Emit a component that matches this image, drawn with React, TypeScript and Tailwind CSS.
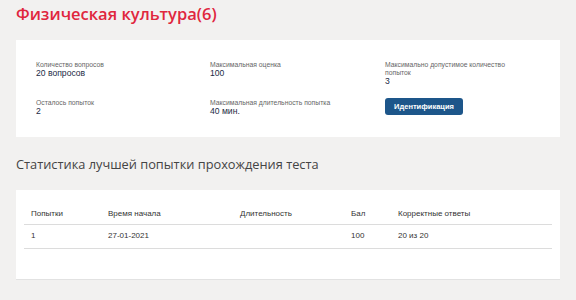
import React from "react";

export default function App() {
  const label = "text-[6.8px] leading-[8px] text-[#666]";
  const value = "text-[8.6px] leading-[9px] text-[#1b2b45]";
  return (
    <div className="w-[576px] h-[300px] bg-[#f2f1f0] overflow-hidden" style={{ fontFamily: "'Liberation Sans', Arial, sans-serif" }}>
      <div className="px-4 pt-[1px]">
        <h1 className="text-[16.5px] leading-[26px] font-semibold text-[#e0263d]" style={{ fontFamily: "'Open Sans', sans-serif" }}>
          Физическая культура(6)
        </h1>
        <div className="mt-[13px] bg-white h-[97px] pl-5 pt-[21px] grid grid-cols-[174px_175px_1fr] grid-rows-[38px_auto] items-start">
          <div className="flex flex-col">
            <div className={label}>Количество вопросов</div>
            <div className={value}>20 вопросов</div>
          </div>
          <div className="flex flex-col">
            <div className={label}>Максимальная оценка</div>
            <div className={value}>100</div>
          </div>
          <div className="flex flex-col">
            <div className={label + " w-[135px]"}>Максимально допустимое количество попыток</div>
            <div className={value}>3</div>
          </div>
          <div className="flex flex-col">
            <div className={label}>Осталось попыток</div>
            <div className={value}>2</div>
          </div>
          <div className="flex flex-col">
            <div className={label}>Максимальная длительность попытка</div>
            <div className={value}>40 мин.</div>
          </div>
          <div className="flex flex-col">
            <button className="-mt-px w-[78px] h-[17px] rounded-[3px] bg-[#1d568a] text-white text-[7.5px] font-bold">
              Идентификация
            </button>
          </div>
        </div>
        <h2 className="mt-[17px] text-[12.8px] leading-[20px] text-[#444]" style={{ fontFamily: "'Open Sans', sans-serif" }}>
          Статистика лучшей попытки прохождения теста
        </h2>
        <div className="mt-[16px] bg-white h-[90px] px-2 pt-[18px] border-b border-[#e2e2e2]">
          <table className="w-full text-[8px] text-[#333] border-collapse">
            <thead>
              <tr className="border-b border-[#dcdcdc] h-[16px] align-top">
                <th className="text-left font-normal pl-[7px] w-[84px]">Попытки</th>
                <th className="text-left font-normal w-[132px]">Время начала</th>
                <th className="text-left font-normal w-[111px]">Длительность</th>
                <th className="text-left font-normal w-[47px]">Бал</th>
                <th className="text-left font-normal">Корректные ответы</th>
              </tr>
            </thead>
            <tbody>
              <tr className="border-b border-[#dcdcdc] h-[24px]">
                <td className="pl-[7px]">1</td>
                <td>27-01-2021</td>
                <td></td>
                <td>100</td>
                <td>20 из 20</td>
              </tr>
            </tbody>
          </table>
        </div>
      </div>
    </div>
  );
}
